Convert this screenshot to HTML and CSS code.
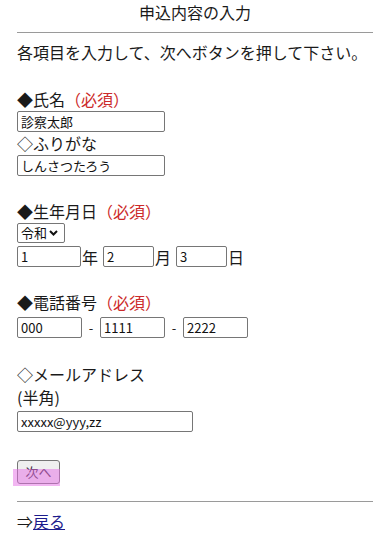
FILE: index.html
```html
<!DOCTYPE html>
<html lang="ja">
<head>
    <meta charset="UTF-8">
    <meta name="viewport" content="width=device-width, initial-scale=1.0">
    <title>申込内容の入力</title>
    <link rel="stylesheet" href="styles.css">
</head>
<body>
    <div class="page-title">申込内容の入力</div>
    <hr class="rule">
    <p class="intro">各項目を入力して、次へボタンを押して下さい。</p>

    <form class="entry-form">
        <div class="label gap-top">◆氏名<span class="req">（必須）</span></div>
        <input type="text" class="field name-field" value="診察太郎">
        <div class="label">◇ふりがな</div>
        <input type="text" class="field name-field" value="しんさつたろう">

        <div class="label gap-top">◆生年月日<span class="req">（必須）</span></div>
        <select class="era">
            <option>令和</option>
            <option>平成</option>
            <option>昭和</option>
        </select>
        <div class="date-row">
            <input type="text" class="field year" value="1"><span class="unit">年</span>
            <input type="text" class="field md" value="2"><span class="unit">月</span>
            <input type="text" class="field md" value="3"><span class="unit">日</span>
        </div>

        <div class="label gap-top">◆電話番号<span class="req">（必須）</span></div>
        <div class="tel-row">
            <input type="text" class="field tel" value="000"><span class="dash">-</span>
            <input type="text" class="field tel" value="1111"><span class="dash">-</span>
            <input type="text" class="field tel" value="2222">
        </div>

        <div class="label gap-mail">◇メールアドレス</div>
        <div class="label">(半角)</div>
        <input type="text" class="field mail" value="xxxxx@yyy,zz">

        <div class="btn-wrap">
            <button type="button" class="next-btn">次へ</button>
            <span class="tap-mark"></span>
        </div>
    </form>

    <hr class="rule bottom-rule">
    <div class="back">⇒<a href="#">戻る</a></div>
</body>
</html>
```

FILE: styles.css
```css
body {
    font-family: "Noto Sans CJK JP", "Liberation Sans", sans-serif;
    font-size: 16px;
    color: #1a1a1a;
    background-color: #fff;
    margin: 0;
    padding: 0 7px 0 17px;
}
.page-title {
    text-align: center;
    line-height: 24px;
}
.rule {
    margin: 8px 0 0;
    border: none;
    border-top: 1px solid #9a9a9a;
    height: 0;
}
.intro {
    margin: 8px 0 0;
    line-height: 23px;
}
.entry-form {
    display: flex;
    flex-direction: column;
    align-items: flex-start;
}
.label {
    line-height: 23px;
}
.gap-top { margin-top: 24px; }
.gap-mail { margin-top: 25px; }
.req { color: #cc2a2a; }
.field {
    box-sizing: border-box;
    height: 21px;
    font-family: "Noto Sans CJK JP", "Liberation Sans", sans-serif;
    font-size: 13px;
    color: #111;
    padding: 0 3px;
    border: 1px solid #767676;
    border-radius: 2px;
    background: #fff;
    margin: 0;
}
.name-field { width: 148px; }
.era {
    -webkit-appearance: none;
    appearance: none;
    box-sizing: border-box;
    width: 48px;
    height: 20px;
    font-family: "Noto Sans CJK JP", sans-serif;
    font-size: 13px;
    line-height: 18px;
    padding: 0 0 0 3px;
    border: 1px solid #767676;
    border-radius: 2px;
    color: #111;
    background: #fff url("data:image/svg+xml;utf8,<svg xmlns='http://www.w3.org/2000/svg' width='9' height='6' viewBox='0 0 9 6'><path d='M1 1 L4.5 4.5 L8 1' fill='none' stroke='%23111' stroke-width='2'/></svg>") no-repeat right 6px center;
}
.date-row {
    display: flex;
    align-items: center;
    margin-top: 3px;
}
.unit {
    line-height: 20px;
    margin: 0 5px 0 1px;
}
.year { width: 64px; }
.md { width: 51px; }
.tel-row {
    display: flex;
    align-items: center;
    margin-top: 3px;
}
.tel { width: 65px; }
.dash {
    width: 18px;
    text-align: center;
    font-size: 13px;
}
.mail {
    width: 176px;
    margin-top: 2px;
}
.btn-wrap {
    position: relative;
    margin-top: 26px;
}
.next-btn {
    box-sizing: border-box;
    width: 43px;
    height: 24px;
    font-family: "Noto Sans CJK JP", sans-serif;
    font-size: 13px;
    color: #3a2a3a;
    background-color: #efefef;
    border: 1px solid #767676;
    border-radius: 3px;
    padding: 0;
}
.tap-mark {
    position: absolute;
    left: -4px;
    top: 11px;
    width: 47px;
    height: 17px;
    background-color: rgba(230, 110, 230, 0.5);
    pointer-events: none;
}
.bottom-rule { margin-top: 17px; }
.back {
    margin-top: 8px;
    line-height: 23px;
}
.back a {
    color: #1c1c8c;
    text-decoration: underline;
}
```
